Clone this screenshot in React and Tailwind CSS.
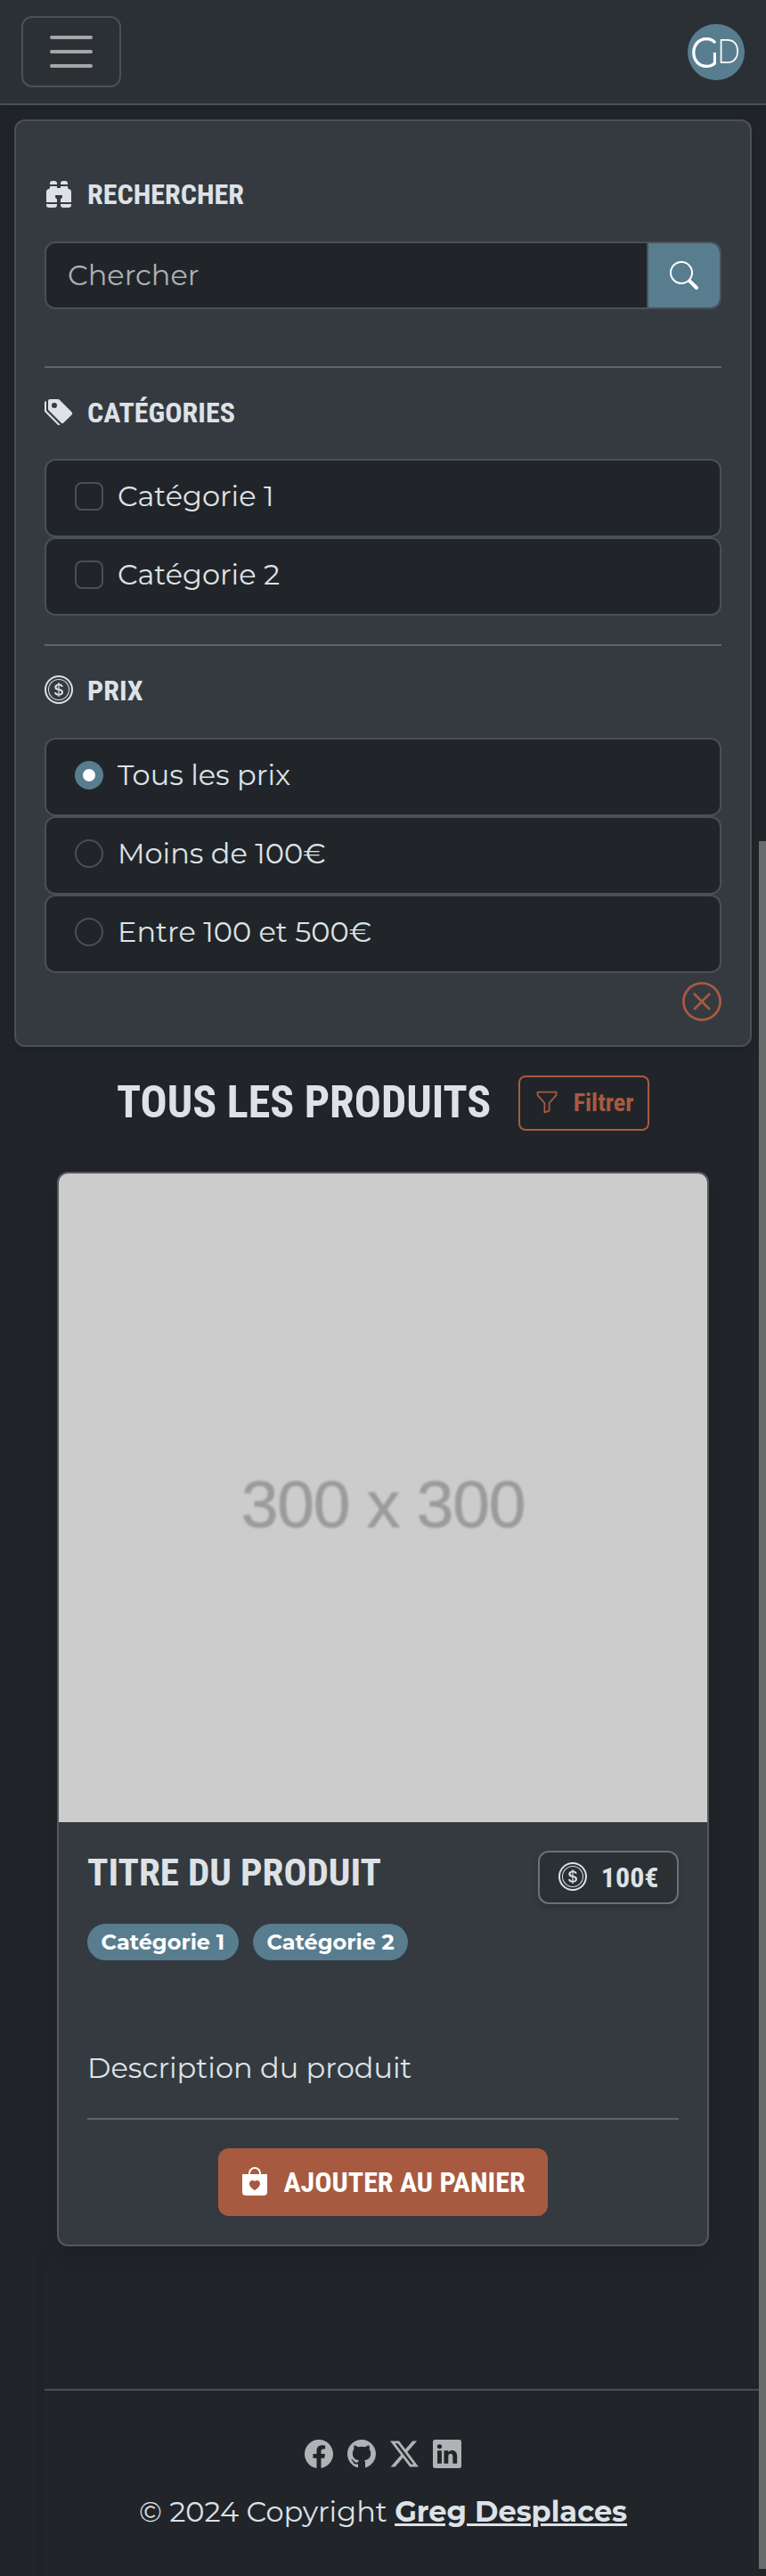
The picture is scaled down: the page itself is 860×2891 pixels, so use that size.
import {
  BsBagHeartFill,
  BsBinocularsFill,
  BsCoin,
  BsFacebook,
  BsFunnel,
  BsGithub,
  BsLinkedin,
  BsSearch,
  BsTagsFill,
  BsTwitterX,
  BsXCircle,
} from "react-icons/bs";

const HEADING = "font-['Roboto_Condensed',Roboto,sans-serif] font-bold";

function Navbar() {
  return (
    <header className="relative z-10 flex h-[118px] items-start justify-between border-b-2 border-[#495057] bg-[#2b3035] px-6 shadow-[0_4px_8px_rgba(0,0,0,0.15)]">
      <button className="mt-[18px] flex h-20 w-28 flex-col items-center justify-center gap-3 rounded-xl border-2 border-[#495057]" aria-label="Menu">
        <span className="h-1 w-12 rounded-full bg-[#a5a6a8]" />
        <span className="h-1 w-12 rounded-full bg-[#a5a6a8]" />
        <span className="h-1 w-12 rounded-full bg-[#a5a6a8]" />
      </button>
      <div className="relative mt-[27px] h-[63px] w-16 overflow-hidden rounded-full bg-[#587d8f] text-white">
        <span className="absolute left-[3px] top-[6px] origin-left scale-x-[0.89] text-[48px] font-normal leading-[52px]">G</span>
        <span className="absolute left-[33px] top-[10px] origin-left scale-x-[0.84] text-[37px] font-light leading-[42px]">D</span>
      </div>
    </header>
  );
}

function SectionTitle({ icon: Icon, children }) {
  return (
    <h2 className={`${HEADING} -mt-px pb-px text-[32px] leading-[38.4px] uppercase`}>
      <Icon className="mr-4 inline size-8 align-[-0.125em]" />
      {children}
    </h2>
  );
}

function Option({ round, checked, children }) {
  return (
    <label className="flex h-[88px] items-start gap-4 rounded-xl border-2 border-[#495057] bg-[#212529] px-8 pt-4">
      {checked ? (
        <span className="mt-2 flex size-8 items-center justify-center rounded-full bg-[#587d8f]">
          <span className="size-[14px] rounded-full bg-white" />
        </span>
      ) : (
        <span className={`mt-2 size-8 border-2 border-[#495057] ${round ? "rounded-full" : "rounded-lg"}`} />
      )}
      <span className="leading-[48px]">{children}</span>
    </label>
  );
}

function Filters() {
  return (
    <aside className="mx-4 mt-4 h-[1041px] rounded-xl border-2 border-[#495057] bg-[#343a40] px-8 pt-[64.4px] shadow-[0_4px_8px_rgba(0,0,0,0.15)]">
      <SectionTitle icon={BsBinocularsFill}>Rechercher</SectionTitle>
      <div className="mt-8 flex h-[76px] overflow-hidden rounded-xl border-2 border-[#495057] bg-[#212529]">
        <div className="flex-1 pl-6 leading-[72px] text-[#adb0b4]">Chercher</div>
        <button className="flex w-[82px] items-center justify-center border-l-2 border-[#495057] bg-[#587d8f] text-white" aria-label="Rechercher">
          <BsSearch className="size-8" />
        </button>
      </div>
      <hr className="mt-16 border-t-2 border-[#5f646b]" />
      <div className="py-8">
        <SectionTitle icon={BsTagsFill}>Catégories</SectionTitle>
      </div>
      <Option>Catégorie 1</Option>
      <Option>Catégorie 2</Option>
      <hr className="mt-8 border-t-2 border-[#5f646b]" />
      <div className="py-8">
        <SectionTitle icon={BsCoin}>Prix</SectionTitle>
      </div>
      <Option round checked>Tous les prix</Option>
      <Option round>Moins de 100€</Option>
      <Option round>Entre 100 et 500€</Option>
      <BsXCircle className="mt-[10px] ml-auto size-11 text-[#a85a40]" />
    </aside>
  );
}

function ProductCard() {
  return (
    <article className="mx-16 mt-[46px] h-[1206px] overflow-hidden rounded-xl border-2 border-[#54585d] bg-[#343a40] shadow-[0_16px_32px_rgba(0,0,0,0.15)]">
      <div className="flex h-[728px] items-center justify-center bg-[#cccccc] pt-[15px]">
        <span className="font-['Liberation_Sans',sans-serif] text-[75px] leading-none tracking-[-1.2px] text-[#9b9b9b] blur-[0.8px] [-webkit-text-stroke:0.6px_#9b9b9b]">
          300 x 300
        </span>
      </div>
      <div className="px-8 pt-8">
        <div className="flex items-start justify-between">
          <h3 className={`${HEADING} -mt-px text-[43.2px] leading-[52px] uppercase`}>Titre du produit</h3>
          <div className={`${HEADING} h-[60px] rounded-xl border-2 border-[#6c707a] bg-[#2b3035] px-[20.5px] text-[32px] leading-[56px] shadow-[0_4px_8px_rgba(0,0,0,0.15)]`}>
            <BsCoin className="mr-4 inline size-8 align-[-0.125em]" />
            100€
          </div>
        </div>
        <div className="mt-[22px] flex gap-4 text-2xl font-bold text-white">
          <span className="h-[41px] rounded-full bg-[#587d8f] px-[15.6px] leading-[41px]">Catégorie 1</span>
          <span className="h-[41px] rounded-full bg-[#587d8f] px-[15.6px] leading-[41px]">Catégorie 2</span>
        </div>
        <p className="mt-[97px] leading-[48px]">Description du produit</p>
        <hr className="my-8 border-t-2 border-[#5f646b]" />
        <button className={`${HEADING} mx-auto block h-[76px] rounded-xl bg-[#a85a40] px-[25.5px] text-[32px] leading-[76px] text-white uppercase`}>
          <BsBagHeartFill className="mr-4 inline size-8 align-[-0.125em]" />
          Ajouter au panier
        </button>
      </div>
    </article>
  );
}

function Footer() {
  return (
    <footer className="flex-1 bg-[linear-gradient(to_right,transparent_42px,#1f2327_42px,#1f2327_50px,transparent_50px)] pt-40">
      <hr className="ml-[50px] border-t-2 border-[#4b4e53]" />
      <div className="mt-[55px] flex justify-center gap-4 text-[#b1b2b6]">
        <BsFacebook className="size-8" />
        <BsGithub className="size-8" />
        <BsTwitterX className="size-8" />
        <BsLinkedin className="size-8" />
      </div>
      <p className="mt-[25px] text-center leading-[48px]">
        © 2024 Copyright <a className="font-bold underline">Greg Desplaces</a>
      </p>
    </footer>
  );
}

export default function App() {
  return (
    <div className="relative flex h-[2891px] w-[860px] flex-col overflow-hidden bg-[#212529] font-[Montserrat,sans-serif] text-[32px] text-[#dee2e6]">
      <Navbar />
      <main>
        <Filters />
        <div className="mt-8 flex h-[62px] items-center justify-center gap-[31px]">
          <h1 className={`${HEADING} -mt-[2px] text-[50px] leading-[60px] uppercase`}>Tous les produits</h1>
          <button className={`${HEADING} h-[62px] rounded-lg border-2 border-[#a85a40] px-[15.5px] text-[28px] leading-[58px] text-[#a85a40]`}>
            <BsFunnel className="mr-4 inline size-7 align-[-0.125em]" />
            Filtrer
          </button>
        </div>
        <ProductCard />
      </main>
      <Footer />
      <div className="absolute top-[944px] right-0 h-[1939px] w-2 bg-[#6a6b6c]" />
    </div>
  );
}
